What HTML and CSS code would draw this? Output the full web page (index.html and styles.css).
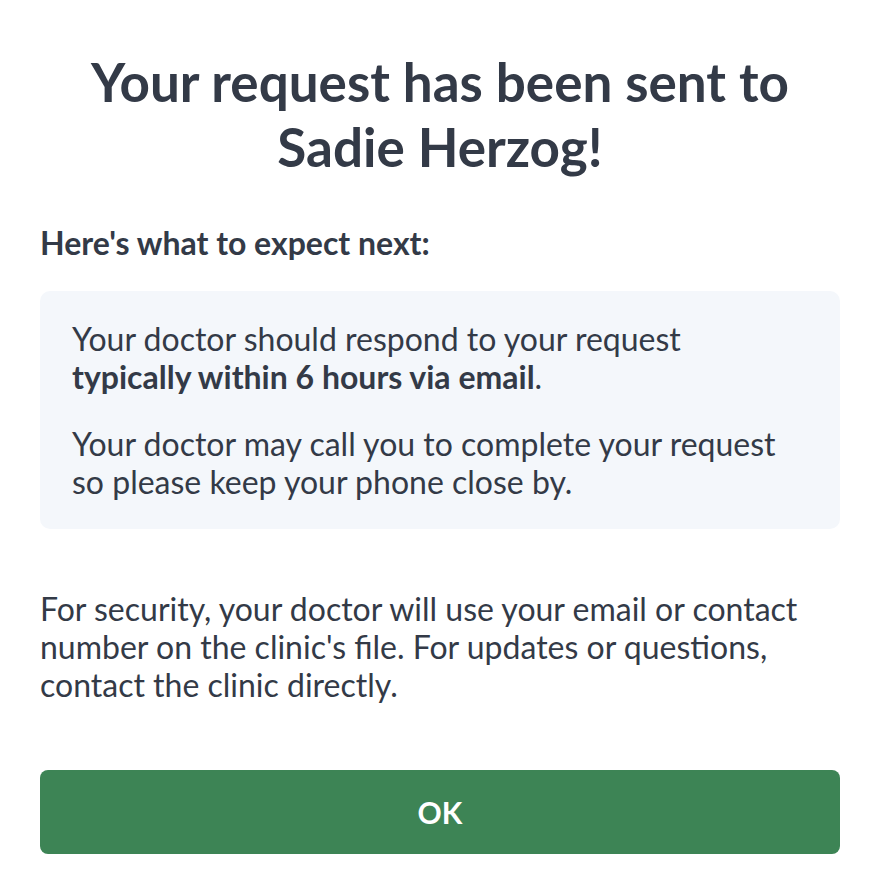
FILE: index.html
```html
<!DOCTYPE html>
<html lang="en">
<head>
    <meta charset="UTF-8">
    <meta name="viewport" content="width=device-width, initial-scale=1.0">
    <title>Request sent</title>
    <link rel="stylesheet" href="styles.css">
</head>
<body>
    <div class="modal">
        <h1 class="title">Your request has been sent to Sadie Herzog!</h1>

        <h2 class="subtitle">Here's what to expect next:</h2>

        <div class="info-box">
            <p>Your doctor should respond to your request<br><strong>typically within 6 hours via email</strong>.</p>
            <p>Your doctor may call you to complete your request so please keep your phone close by.</p>
        </div>

        <p class="note">For security, your doctor will use your email or contact number on the clinic's file. For updates or questions, contact the clinic directly.</p>

        <button class="ok-button">OK</button>
    </div>
</body>
</html>
```

FILE: styles.css
```css
body {
    font-family: 'Lato', 'Open Sans', sans-serif;
    margin: 0;
    padding: 0;
    background-color: #ffffff;
    color: #333a47;
}

.modal {
    padding: 49px 30px 0 40px;
    display: flex;
    flex-direction: column;
}

.title {
    margin: 0 40px 45px;
    text-align: center;
    font-size: 53px;
    line-height: 65px;
    font-weight: 700;
}

.subtitle {
    margin: 0 0 29px;
    font-size: 32px;
    line-height: 38px;
    font-weight: 700;
}

.info-box {
    background-color: #f4f7fb;
    border-radius: 10px;
    padding: 29px 32px 28px;
}

.info-box p {
    margin: 0;
    font-size: 32px;
    line-height: 38px;
}

.info-box p + p {
    margin-top: 29px;
}

.info-box strong {
    font-weight: 700;
}

.note {
    margin: 61px 0 0;
    font-size: 32px;
    line-height: 38px;
}

.ok-button {
    margin-top: 66px;
    height: 84px;
    border: none;
    border-radius: 8px;
    background-color: #3d8455;
    color: #ffffff;
    font-family: inherit;
    font-size: 30px;
    font-weight: 700;
    cursor: pointer;
}
```
